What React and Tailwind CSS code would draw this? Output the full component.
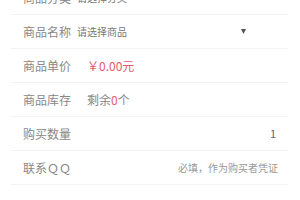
import React from "react";

const Arrow = () => (
  <svg width="5" height="5" viewBox="0 0 5 5" className="shrink-0">
    <path d="M0 0 L5 0 L2.5 5 Z" fill="#555" />
  </svg>
);

const Row = ({ label, children }) => (
  <div className="flex items-center h-[34px] border-b border-[#f3f3f3] pl-[12px] pr-[12px]">
    <span className="w-[54px] shrink-0 text-[12px] text-[#888] leading-none">
      {label}
    </span>
    <div className="flex-1 flex items-center min-w-0">{children}</div>
  </div>
);

const App = () => {
  return (
    <div
      className="w-[300px] h-[200px] overflow-hidden bg-white"
      style={{ fontFamily: '"Noto Sans CJK SC", "Noto Sans", sans-serif' }}
    >
      <div className="ml-[11px] mr-[12px] -mt-[19px]">
        <Row label="商品分类">
          <span className="text-[10px] text-[#777]">请选择分类</span>
          <span className="ml-auto mr-[30px]">
            <Arrow />
          </span>
        </Row>
        <Row label="商品名称">
          <span className="text-[10px] text-[#777]">请选择商品</span>
          <span className="ml-auto mr-[30px]">
            <Arrow />
          </span>
        </Row>
        <Row label="商品单价">
          <span className="pl-[10px] text-[12px] text-[#e55a6a]">￥0.00元</span>
        </Row>
        <Row label="商品库存">
          <span className="pl-[10px] text-[12px] text-[#888]">
            剩余<span className="text-[#e55a6a]">0</span>个
          </span>
        </Row>
        <Row label="购买数量">
          <span className="ml-auto text-[11px] text-[#666]">1</span>
        </Row>
        <Row label="联系ＱＱ">
          <span className="ml-auto -mr-[2px] text-[10px] text-[#999]">
            必填，作为购买者凭证
          </span>
        </Row>
      </div>
    </div>
  );
};

export default App;
